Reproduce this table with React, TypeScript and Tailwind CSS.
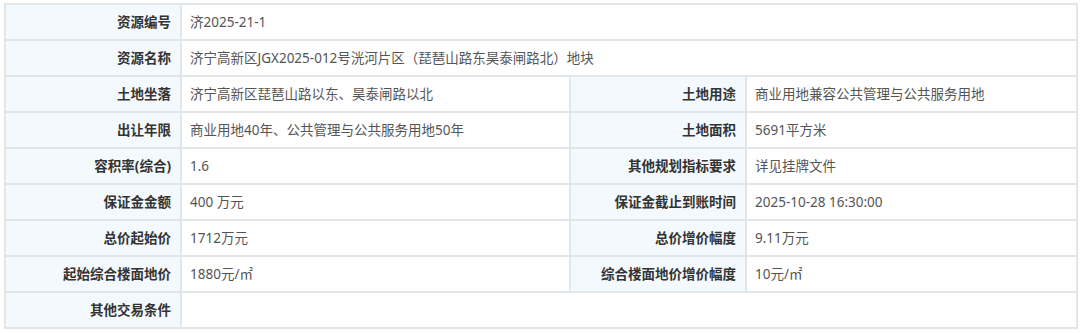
type Cell = { label: string; value: string };

const rows: (Cell | [Cell, Cell])[] = [
  { label: "资源编号", value: "济2025-21-1" },
  { label: "资源名称", value: "济宁高新区JGX2025-012号洸河片区（琵琶山路东昊泰闸路北）地块" },
  [
    { label: "土地坐落", value: "济宁高新区琵琶山路以东、昊泰闸路以北" },
    { label: "土地用途", value: "商业用地兼容公共管理与公共服务用地" },
  ],
  [
    { label: "出让年限", value: "商业用地40年、公共管理与公共服务用地50年" },
    { label: "土地面积", value: "5691平方米" },
  ],
  [
    { label: "容积率(综合)", value: "1.6" },
    { label: "其他规划指标要求", value: "详见挂牌文件" },
  ],
  [
    { label: "保证金金额", value: "400 万元" },
    { label: "保证金截止到账时间", value: "2025-10-28 16:30:00" },
  ],
  [
    { label: "总价起始价", value: "1712万元" },
    { label: "总价增价幅度", value: "9.11万元" },
  ],
  [
    { label: "起始综合楼面地价", value: "1880元/㎡" },
    { label: "综合楼面地价增价幅度", value: "10元/㎡" },
  ],
  { label: "其他交易条件", value: "" },
];

const th =
  "h-9 border-2 border-[#e3e6e9] bg-[#f3f9fd] pr-[9px] text-right font-bold text-[#333]";
const td = "h-9 border-2 border-[#e3e6e9] bg-white pl-2 text-left text-[#555]";

export default function App() {
  return (
    <div className="bg-white px-[4px] pt-[3px] font-['Noto_Sans','Noto_Sans_CJK_SC',sans-serif] text-[13.5px]">
      <table className="w-[1072px] table-fixed border-collapse">
        <colgroup>
          <col className="w-[176px]" />
          <col className="w-[389px]" />
          <col className="w-[176px]" />
          <col className="w-[331px]" />
        </colgroup>
        <tbody>
          {rows.map((row, i) =>
            Array.isArray(row) ? (
              <tr key={i}>
                <th className={th}>{row[0].label}</th>
                <td className={td}>{row[0].value}</td>
                <th className={th}>{row[1].label}</th>
                <td className={td}>{row[1].value}</td>
              </tr>
            ) : (
              <tr key={i}>
                <th className={th}>{row.label}</th>
                <td className={td} colSpan={3}>
                  {row.value}
                </td>
              </tr>
            )
          )}
        </tbody>
      </table>
    </div>
  );
}
